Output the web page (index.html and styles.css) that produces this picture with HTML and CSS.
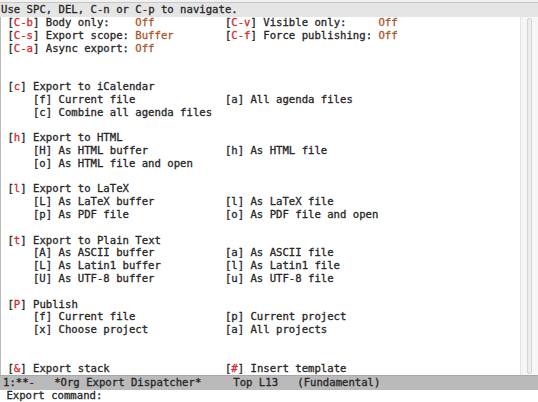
FILE: index.html
```html
<!DOCTYPE html>
<html>
<head>
<meta charset="utf-8">
<title>Org Export Dispatcher</title>
<link rel="stylesheet" href="styles.css">
</head>
<body>
<div class="frame">
  <div class="header">Use SPC, DEL, C-n or C-p to navigate.</div>
  <div class="main">
    <div class="buffer">
      <div class="row"><div class="c1"><span class="lbl">[<span class="k">C-b</span>] Body only:</span><span class="v">Off</span></div><div class="c2"><span class="lbl2">[<span class="k">C-v</span>] Visible only:</span><span class="v">Off</span></div></div>
      <div class="row"><div class="c1"><span class="lbl">[<span class="k">C-s</span>] Export scope:</span><span class="v">Buffer</span></div><div class="c2"><span class="lbl2">[<span class="k">C-f</span>] Force publishing:</span><span class="v">Off</span></div></div>
      <div class="row"><div class="c1"><span class="lbl">[<span class="k">C-a</span>] Async export:</span><span class="v">Off</span></div></div>
      <div class="row"></div>
      <div class="row"></div>
      <div class="row"><div class="c1">[<span class="k">c</span>] Export to iCalendar</div></div>
      <div class="row"><div class="c1 sub">[f] Current file</div><div class="c2">[a] All agenda files</div></div>
      <div class="row"><div class="c1 sub">[c] Combine all agenda files</div></div>
      <div class="row"></div>
      <div class="row"><div class="c1">[<span class="k">h</span>] Export to HTML</div></div>
      <div class="row"><div class="c1 sub">[H] As HTML buffer</div><div class="c2">[h] As HTML file</div></div>
      <div class="row"><div class="c1 sub">[o] As HTML file and open</div></div>
      <div class="row"></div>
      <div class="row"><div class="c1">[<span class="k">l</span>] Export to LaTeX</div></div>
      <div class="row"><div class="c1 sub">[L] As LaTeX buffer</div><div class="c2">[l] As LaTeX file</div></div>
      <div class="row"><div class="c1 sub">[p] As PDF file</div><div class="c2">[o] As PDF file and open</div></div>
      <div class="row"></div>
      <div class="row"><div class="c1">[<span class="k">t</span>] Export to Plain Text</div></div>
      <div class="row"><div class="c1 sub">[A] As ASCII buffer</div><div class="c2">[a] As ASCII file</div></div>
      <div class="row"><div class="c1 sub">[L] As Latin1 buffer</div><div class="c2">[l] As Latin1 file</div></div>
      <div class="row"><div class="c1 sub">[U] As UTF-8 buffer</div><div class="c2">[u] As UTF-8 file</div></div>
      <div class="row"></div>
      <div class="row"><div class="c1">[<span class="k">P</span>] Publish</div></div>
      <div class="row"><div class="c1 sub">[f] Current file</div><div class="c2">[p] Current project</div></div>
      <div class="row"><div class="c1 sub">[x] Choose project</div><div class="c2">[a] All projects</div></div>
      <div class="row"></div>
      <div class="row"></div>
      <div class="row"><div class="c1">[<span class="k">&amp;</span>] Export stack</div><div class="c2">[<span class="k">#</span>] Insert template</div></div>
    </div>
    <div class="scrollbar"><div class="thumb"></div></div>
  </div>
  <div class="modeline"><span>1:**-</span><span class="ml-name">*Org Export Dispatcher*</span><span class="ml-pos">Top L13</span><span class="ml-mode">(Fundamental)</span></div>
  <div class="minibuf">Export command:</div>
</div>
</body>
</html>
```

FILE: styles.css
```css
html, body {
  margin: 0;
  padding: 0;
  background: #ffffff;
}

.frame {
  width: 538px;
  height: 402px;
  overflow: hidden;
  font-family: "DejaVu Sans Mono", "Liberation Mono", monospace;
  font-size: 10.63px;
  line-height: 12.8px;
  color: #262626;
  -webkit-text-stroke: 0.3px currentColor;
  display: flex;
  flex-direction: column;
}

.header {
  height: 17px;
  flex: none;
  box-sizing: border-box;
  padding: 4px 0 0 1px;
  background: #e5e5e5;
  box-shadow: inset 0 2px 0 #f1f1f1, inset 0 3px 0 #c6c6c6;
  white-space: pre;
}

.main {
  height: 358.4px;
  flex: none;
  display: flex;
  border-left: 1px solid #b9b9b9;
}

.buffer {
  flex: 1;
  min-width: 0;
  background: #ffffff;
}

.row {
  display: flex;
  height: 12.8px;
  white-space: pre;
}

.c1 {
  flex: none;
  width: 35ch;
  box-sizing: border-box;
  padding-left: 1ch;
}

.c1.sub {
  padding-left: 5ch;
}

.lbl {
  display: inline-block;
  width: 20ch;
}

.lbl2 {
  display: inline-block;
  width: 24ch;
}

.k {
  color: #d42b2b;
}

.v {
  color: #a9572c;
}

.scrollbar {
  width: 18px;
  flex: none;
  box-sizing: border-box;
  background: #f6f6f6;
  border-left: 1px solid #e4e4e4;
  padding: 1px 6px 1px 6px;
}

.thumb {
  height: 100%;
  box-sizing: border-box;
  border: 1px solid #d6d6d6;
  border-radius: 2px;
  background: #ededed;
}

.modeline {
  height: 14.6px;
  flex: none;
  box-sizing: border-box;
  padding: 1px 0 0 3px;
  background: #bababa;
  border-top: 1px solid #a8a8a8;
  white-space: pre;
  display: flex;
}

.ml-name {
  margin-left: 3ch;
}

.ml-pos {
  margin-left: 5ch;
}

.ml-mode {
  margin-left: 3ch;
}

.minibuf {
  flex: 1;
  padding-left: 1ch;
  background: #ffffff;
  white-space: pre;
}
```
